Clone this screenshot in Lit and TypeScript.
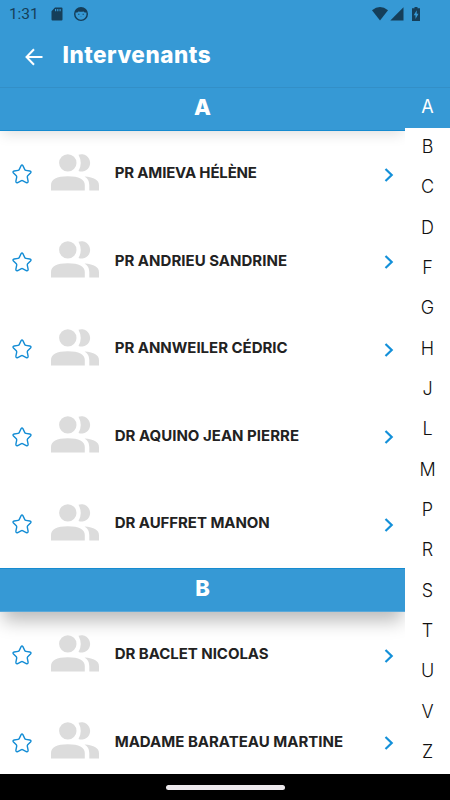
import { LitElement, html, css, svg } from "lit";
import { customElement, property } from "lit/decorators.js";
import { styleMap } from "lit/directives/style-map.js";

interface Person { name: string; tracking: number }

const groups: { letter: string; people: Person[] }[] = [
  { letter: "A", people: [
    { name: "PR AMIEVA HÉLÈNE", tracking: -0.17 },
    { name: "PR ANDRIEU SANDRINE", tracking: 0.02 },
    { name: "PR ANNWEILER CÉDRIC", tracking: -0.02 },
    { name: "DR AQUINO JEAN PIERRE", tracking: 0.01 },
    { name: "DR AUFFRET MANON", tracking: -0.05 },
  ] },
  { letter: "B", people: [
    { name: "DR BACLET NICOLAS", tracking: -0.04 },
    { name: "MADAME BARATEAU MARTINE", tracking: 0 },
  ] },
];
const letters = "ABCDFGHJLMPRSTUVZ".split("");

@customElement("status-bar")
class StatusBar extends LitElement {
  static styles = css`
    :host { display: flex; align-items: center; height: 27px; padding: 0 30px 0 9px; color: #153e59; font: 400 15.5px/27px Roboto, sans-serif; }
    .time { width: 42px; letter-spacing: -.1px; padding-top: 1px; }
    .fill { flex: 1; }
    svg { display: block; fill: currentColor; }
    .cat { margin-left: 11px; }
    .signal { margin-left: 2px; }
    .battery { margin-left: 8px; }
  `;
  render() {
    return html`
      <span class="time">1:31</span>
      <svg width="12" height="14" viewBox="0 0 12 14"><path fill-rule="evenodd" d="M4 .5h6.5Q11.5.5 11.5 1.5v11q0 1-1 1h-9q-1 0-1-1V4.2zM4 2v2.3h1.2V2zm2.2 0v2.3h1.2V2zm2.3 0v2.3h1.2V2z"/></svg>
      <svg class="cat" width="14" height="14" viewBox="0 0 14 14"><path fill-rule="evenodd" d="M7 0a7 7 0 1 0 0 14A7 7 0 0 0 7 0m0 12.7A5.5 5.5 0 0 1 1.5 7q0-1 .4-1.8L3 5.800l1.500-1.400q2.500.8 5 0L11 5.800l1.100-.6q.4.800.4 1.800A5.500 5.500 0 0 1 7 12.700M4.200 6.800v1h1.200v-1zm4.400 0v1h1.200v-1zM6.400 9.500l.6.500.6-.5z"/></svg>
      <span class="fill"></span>
      <svg width="16" height="14" viewBox="0 0 16 14"><path d="M0 3.200Q8-3 16 3.200L8 13.500z"/></svg>
      <svg class="signal" width="14" height="14" viewBox="0 0 14 14"><path d="M13.500.3v13.200H.3z"/></svg>
      <svg class="battery" width="8" height="14" viewBox="0 0 8 14"><path fill-rule="evenodd" d="M2.500 0h3v1.300H8V14H0V1.300h2.500zM4.700 3.300 1.700 8.200h1.800v3.700l3-5.200H4.700z"/></svg>
    `;
  }
}

const star = svg`<path d="M9.100 1.700Q10 .3 10.900 1.700L12.800 5.600Q13.100 6.300 13.900 6.400L17.800 7Q19.800 7.400 18.500 9L15.700 11.700Q15.200 12.300 15.300 13.100L16.100 17.100Q16.300 19.300 14.200 18.500L11 16.800Q10 16.300 9 16.800L5.800 18.500Q3.700 19.300 3.900 17.100L4.700 13.100Q4.800 12.300 4.300 11.700L1.500 9Q.2 7.400 2.200 7L6.100 6.400Q6.900 6.300 7.200 5.600Z"/>`;

@customElement("person-row")
class PersonRow extends LitElement {
  @property({ attribute: false }) person!: Person;
  static styles = css`
    :host { display: flex; align-items: center; height: 87.500px; padding: 0 10.500px 0 12px; box-sizing: border-box; }
    .star { width: 20px; height: 20px; fill: none; stroke: #148dd5; stroke-width: 1.400; }
    .people { width: 48px; height: 37px; margin: -4px 0 0 19px; fill: #dcdcdc; }
    .name { flex: 1; margin: -2.500px 0 0 15.700px; font: 700 15px/22px Inter, sans-serif; color: #222; white-space: nowrap; }
    .chevron { width: 12px; height: 16px; margin-top: 1px; fill: none; stroke: #1390d9; stroke-width: 2.200; }
  `;
  render() {
    return html`
      <svg class="star" viewBox="0 0 20 20">${star}</svg>
      <svg class="people" viewBox="0 0 48 37">
        <circle cx="16.800" cy="8.900" r="8.700"/>
        <path d="M27.500.700A8.700 8.700 0 1 1 27.500 17.100Q32 9 27.500.700M0 36.500V31q0-8.700 16.800-8.700T33.800 31v5.500zM33.500 22.600Q48 23.500 48 31.500v5h-9.700V31q0-5.500-4.800-8.400"/>
      </svg>
      <span class="name"><span style=${styleMap({ letterSpacing: this.person.tracking + "px" })}>${this.person.name}</span></span>
      <svg class="chevron" viewBox="0 0 12 16"><path d="M2.500 2 8.700 8l-6.200 6"/></svg>
    `;
  }
}

@customElement("app-root")
class AppRoot extends LitElement {
  static styles = css`
    :host { display: flex; flex-direction: column; height: 800px; overflow: hidden; background: #fff; font-family: Inter, sans-serif; }
    .top { height: 87px; background: #3699d5; flex: none; }
    .bar { display: flex; align-items: center; height: 60px; color: #fff; }
    .back { width: 18px; height: 18px; margin-left: 25px; fill: none; stroke: #fff; stroke-width: 2; }
    .title { margin: -4px 0 0 19.500px; font: 800 22.500px/30px Inter, sans-serif; letter-spacing: .5px; }
    .main { display: flex; height: 687px; flex: none; overflow: hidden; }
    .list { width: 405px; height: 687px; overflow: hidden; }
    .head { height: 43.500px; box-sizing: border-box; padding-bottom: 3px; display: flex; align-items: center; justify-content: center; background: #3699d5; border-top: 1px solid #168bd0; border-bottom: 1px solid #5aa9da; color: #fff; font: 800 22px/28px Inter, sans-serif; box-shadow: 0 12px 18px -3px rgba(0,0,0,.27); }
    .head.first { border-top-color: #338fc7; border-bottom-color: #168bd0; box-shadow: 0 5px 14px -2px rgba(0,0,0,.13); }
    .index { width: 45px; height: 687px; display: flex; flex-direction: column; background: #fff; }
    .letter { height: 40.350px; flex: none; box-sizing: border-box; padding-bottom: 2.500px; display: flex; align-items: center; justify-content: center; font: 300 18px/24px Inter, sans-serif; color: #111; }
    .letter.on { height: 41px; padding-bottom: 3px; background: #3699d5; color: #fff; font-weight: 400; border-top: 1px solid #338fc7; }
    .nav { flex: 1; display: flex; justify-content: center; align-items: center; background: #000; }
    .pill { width: 119px; height: 5px; border-radius: 3px; background: #ece8ec; }
  `;
  render() {
    return html`
      <div class="top">
        <status-bar></status-bar>
        <div class="bar">
          <svg class="back" viewBox="0 0 18 18"><path d="M17.500 9H2M9 1.200 1.500 9 9 16.800"/></svg>
          <span class="title">Intervenants</span>
        </div>
      </div>
      <div class="main">
        <div class="list">
          ${groups.map((g, i) => html`
            <div class="head ${i === 0 ? "first" : ""}">${g.letter}</div>
            ${g.people.map((p) => html`<person-row .person=${p}></person-row>`)}
          `)}
        </div>
        <div class="index">
          ${letters.map((l, i) => html`<div class="letter ${i === 0 ? "on" : ""}">${l}</div>`)}
        </div>
      </div>
      <div class="nav"><div class="pill"></div></div>
    `;
  }
}
